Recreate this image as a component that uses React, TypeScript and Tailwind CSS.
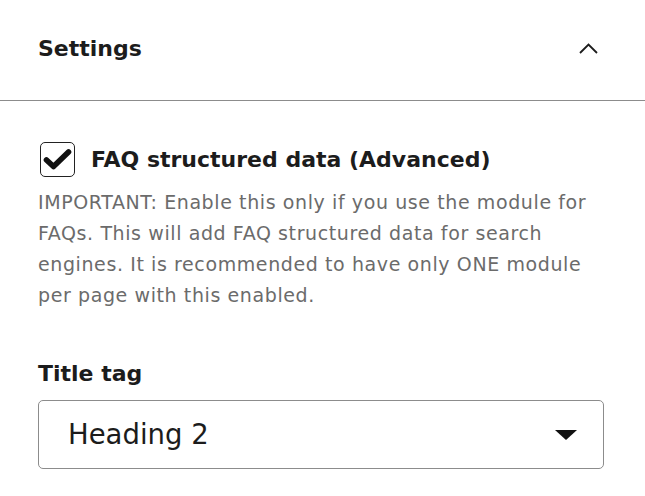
import React from "react";

export default function App() {
  return (
    <div className="w-[645px] h-[496px] bg-white overflow-hidden font-['DejaVu_Sans',sans-serif] text-[#1c1c1c]">
      <div className="h-[101px] border-b border-[#8c8c8c] flex items-center justify-between pl-[38px] pr-[47px] pb-[3px]">
        <span className="text-[22px] font-bold leading-none">Settings</span>
        <svg width="19" height="11" viewBox="0 0 19 11" fill="none">
          <path d="M1 10L9.5 1.5L18 10" stroke="#1c1c1c" strokeWidth="1.8" />
        </svg>
      </div>
      <div className="pl-[38px] pr-[41px]">
        <div className="mt-[41px] flex items-center gap-[16px]">
          <div className="ml-[2px] w-[35px] h-[35px] rounded-[5px] border-[1.5px] border-[#222] flex items-center justify-center shrink-0">
            <svg width="29" height="23" viewBox="0 0 29 23" fill="none">
              <path d="M3.5 12L10.5 18.5L25.5 4" stroke="#111" strokeWidth="5.6" strokeLinecap="round" strokeLinejoin="round" />
            </svg>
          </div>
          <span className="text-[22px] font-bold leading-none">FAQ structured data (Advanced)</span>
        </div>
        <p className="mt-[10px] text-[19px] leading-[31px] tracking-[0.6px] text-[#6b6b6b]">
          IMPORTANT: Enable this only if you use the module for FAQs. This will add FAQ structured data for search engines. It is recommended to have only ONE module per page with this enabled.
        </p>
        <div className="mt-[49px] text-[22px] font-bold leading-[28px]">Title tag</div>
        <div className="mt-[12px] h-[69px] rounded-[5px] border border-[#8c8c8c] flex items-center justify-between pl-[29px] pr-[26px]">
          <span className="text-[27.5px] leading-none text-[#1c1c1c]">Heading 2</span>
          <svg width="22" height="10" viewBox="0 0 22 10">
            <path d="M0 0H22L11 10Z" fill="#111" />
          </svg>
        </div>
      </div>
    </div>
  );
}
